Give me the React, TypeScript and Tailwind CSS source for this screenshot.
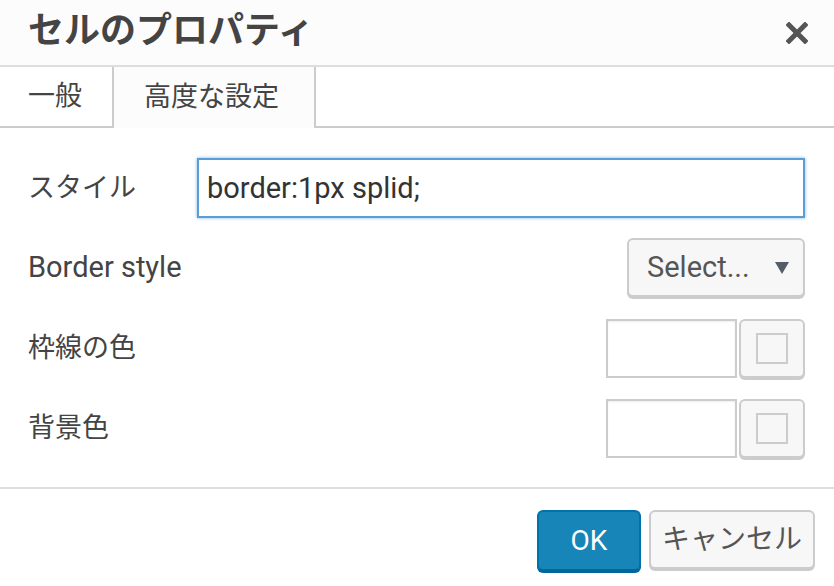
import React from "react";

const font = "font-['Roboto','Noto_Sans_CJK_JP',sans-serif]";

const ColorRow: React.FC<{ label: string }> = ({ label }) => (
  <div className="flex h-[60px] items-center justify-between">
    <span className="text-[27px] text-[#444]">{label}</span>
    <div className="flex items-start gap-[2px]">
      <input
        className="h-[59px] w-[131px] border-2 border-[#ccc] bg-white shadow-[inset_0_1px_2px_rgba(0,0,0,0.07)] outline-none"
        readOnly
      />
      <button className="flex h-[59px] w-[66px] items-center justify-center rounded-[6px] border-2 border-[#ccc] bg-[#f7f7f7] shadow-[0_2px_0_#ccc]">
        <span className="block h-[31px] w-[32px] border-2 border-[#ccc]" />
      </button>
    </div>
  </div>
);

const App: React.FC = () => {
  return (
    <div className={`h-[586px] w-[834px] overflow-hidden bg-white ${font}`}>
      {/* header */}
      <div className="flex h-[67px] items-center justify-between border-b-2 border-[#ddd] bg-[#fcfcfc] pl-[28px] pr-[26px]">
        <h1 className="-mt-[4px] text-[36px] font-bold leading-none text-[#444]">セルのプロパティ</h1>
        <svg width="22" height="22" viewBox="0 0 22 22">
          <path d="M3 3 L19 19 M19 3 L3 19" stroke="#555" strokeWidth="5" strokeLinecap="square" />
        </svg>
      </div>

      {/* tabs */}
      <div className="flex h-[61px]">
        <div className="flex w-[114px] items-center border-b-2 border-r-2 border-[#ccc] pl-[28px] text-[27px] text-[#444]">
          一般
        </div>
        <div className="flex w-[202px] items-center border-r-2 border-[#ccc] bg-[#fcfcfc] pl-[30px] text-[27px] text-[#444]">
          高度な設定
        </div>
        <div className="flex-1 border-b-2 border-[#ccc]" />
      </div>

      {/* body */}
      <div className="flex flex-col gap-[20px] pb-[29px] pl-[28px] pr-[29px] pt-[30px]">
        <div className="flex h-[60px] items-center">
          <span className="w-[169px] text-[27px] text-[#444]">スタイル</span>
          <input
            className="h-[60px] flex-1 border-2 border-[#5b9dd9] px-[8px] text-[29px] text-[#333] shadow-[0_0_3px_rgba(30,140,190,0.6)] outline-none"
            defaultValue="border:1px splid;"
          />
        </div>
        <div className="flex h-[60px] items-center justify-between">
          <span className="text-[29px] text-[#444]">Border style</span>
          <button className="flex h-[59px] w-[178px] items-center justify-between self-start rounded-[6px] border-2 border-[#ccc] bg-[#f7f7f7] pl-[18px] pr-[14px] text-[29px] text-[#555] shadow-[0_2px_0_#ccc]">
            <span>Select...</span>
            <svg width="14" height="12" viewBox="0 0 14 12">
              <path d="M0 0 H14 L7 12 Z" fill="#555d66" />
            </svg>
          </button>
        </div>
        <ColorRow label="枠線の色" />
        <ColorRow label="背景色" />
      </div>

      {/* footer */}
      <div className="flex justify-end gap-[8px] border-t-2 border-[#ddd] pr-[19px] pt-[21px]">
        <button className="h-[61px] w-[104px] rounded-[6px] border-2 border-[#0073aa] border-b-[#006799] bg-[#1885b8] text-[28px] text-white shadow-[0_2px_0_#006799]">
          OK
        </button>
        <button className="h-[59px] w-[166px] rounded-[6px] border-2 border-[#ccc] bg-[#f7f7f7] text-[28px] text-[#555] shadow-[0_2px_0_#ccc]">
          キャンセル
        </button>
      </div>
    </div>
  );
};

export default App;
